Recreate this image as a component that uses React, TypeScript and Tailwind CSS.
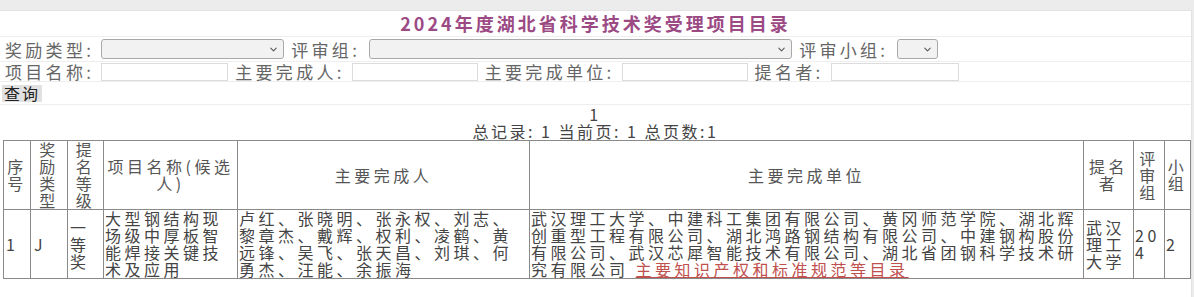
import React from 'react';
import { ChevronDown } from 'lucide-react';

const font = { fontFamily: '"Noto Sans CJK SC", "Noto Sans", sans-serif' };

function FakeSelect({ width }: { width: string }) {
    return (
        <div className={`${width} h-[20px] flex items-center justify-end pr-[4px] border border-[#a9a9a9] rounded-[3px] bg-[#f2f2f2]`}>
            <ChevronDown size={11} strokeWidth={2.2} className="text-[#555]" />
        </div>
    );
}

function TextBox({ width }: { width: string }) {
    return <div className={`${width} h-[18px] border border-[#dcdcdc] bg-white`} />;
}

function Label({ children }: { children: React.ReactNode }) {
    return <span className="text-[#666] whitespace-nowrap text-[17px] tracking-[3.3px] leading-[17px]">{children}</span>;
}

function App() {
    return (
        <div style={font} className="w-full h-[297px] bg-[#ececec] pt-[10px] overflow-hidden">
            <div className="w-[1192px] h-[287px] bg-white border-r border-t border-[#e3e3e3] text-[16px] tracking-[3.5px] leading-[17px]">
                {/* titulo */}
                <div className="h-[26px] flex items-center justify-center border-b border-[#eeeeee]">
                    <h1 className="text-[18px] font-bold tracking-[3px] text-[#9c4a84]">2024年度湖北省科学技术奖受理项目目录</h1>
                </div>

                {/* filtros */}
                <div className="h-[25px] flex items-center gap-[7px] pl-[5px] border-b border-[#eeeeee]">
                    <Label>奖励类型:</Label>
                    <FakeSelect width="w-[183px]" />
                    <Label>评审组:</Label>
                    <div className="ml-[2px]"><FakeSelect width="w-[423px]" /></div>
                    <Label>评审小组:</Label>
                    <div className="ml-[2px]"><FakeSelect width="w-[41px]" /></div>
                </div>
                <div className="h-[20px] flex items-center gap-[7px] pl-[5px] border-b border-[#eeeeee]">
                    <Label>项目名称:</Label>
                    <TextBox width="w-[127px]" />
                    <Label>主要完成人:</Label>
                    <TextBox width="w-[126px]" />
                    <Label>主要完成单位:</Label>
                    <TextBox width="w-[126px]" />
                    <Label>提名者:</Label>
                    <TextBox width="w-[128px]" />
                </div>
                <div className="h-[23px] flex items-center pl-[2px] border-b border-[#eeeeee]">
                    <button className="h-[17px] px-[2px] bg-[#e1e1e1] text-[#222] tracking-[2px] leading-[17px]">查询</button>
                </div>

                {/* paginacao */}
                <div className="text-center text-[#444]">
                    <p className="leading-[18px]">1</p>
                    <p className="tracking-[2.5px]">总记录: 1 当前页: 1 总页数:1</p>
                </div>

                <table className="ml-[3px] w-[1187px] table-fixed border-collapse text-[#444]">
                    <colgroup>
                        <col className="w-[27px]" />
                        <col className="w-[37px]" />
                        <col className="w-[36px]" />
                        <col className="w-[134px]" />
                        <col className="w-[292px]" />
                        <col className="w-[554px]" />
                        <col className="w-[50px]" />
                        <col className="w-[31px]" />
                        <col className="w-[26px]" />
                    </colgroup>
                    <thead>
                        <tr className="h-[68px] text-center text-[#555]">
                            <th className="font-normal border border-[#8a8a8a] px-0">序号</th>
                            <th className="font-normal border border-[#8a8a8a] px-[2px]">奖励类型</th>
                            <th className="font-normal border border-[#8a8a8a] px-[2px]">提名等级</th>
                            <th className="font-normal border border-[#8a8a8a] px-[2px]">项目名称(候选人)</th>
                            <th className="font-normal border border-[#8a8a8a]">主要完成人</th>
                            <th className="font-normal border border-[#8a8a8a]">主要完成单位</th>
                            <th className="font-normal border border-[#8a8a8a] px-[2px]">提名者</th>
                            <th className="font-normal border border-[#8a8a8a] px-[2px]">评审组</th>
                            <th className="font-normal border border-[#8a8a8a] px-[2px]">小组</th>
                        </tr>
                    </thead>
                    <tbody>
                        <tr className="h-[68px] align-middle text-left">
                            <td className="border border-[#8a8a8a] pl-[2px]">1</td>
                            <td className="border border-[#8a8a8a] pl-[3px]">J</td>
                            <td className="border border-[#8a8a8a] pl-[2px]">一等奖</td>
                            <td className="border border-[#8a8a8a] pl-[1px]">大型钢结构现场级中厚板智能焊接关键技术及应用</td>
                            <td className="border border-[#8a8a8a] pl-[1px]">卢红、张晓明、张永权、刘志、黎章杰、戴辉、权利、凌鹤、黄远锋、吴飞、张天昌、刘琪、何勇杰、汪能、余振海</td>
                            <td className="border border-[#8a8a8a] pl-[1px]">
                                武汉理工大学、中建科工集团有限公司、黄冈师范学院、湖北辉创重型工程有限公司、湖北鸿路钢结构有限公司、中建钢构股份有限公司、武汉芯犀智能技术有限公司、湖北省团钢科学技术研究有限公司{' '}
                                <a href="#" className="text-[#c0504d] underline">主要知识产权和标准规范等目录</a>
                            </td>
                            <td className="border border-[#8a8a8a] pl-[2px]">武汉理工大学</td>
                            <td className="border border-[#8a8a8a] pl-[1px] break-all">204</td>
                            <td className="border border-[#8a8a8a] pl-[1px]">2</td>
                        </tr>
                    </tbody>
                </table>
            </div>
        </div>
    );
}

export default App;
